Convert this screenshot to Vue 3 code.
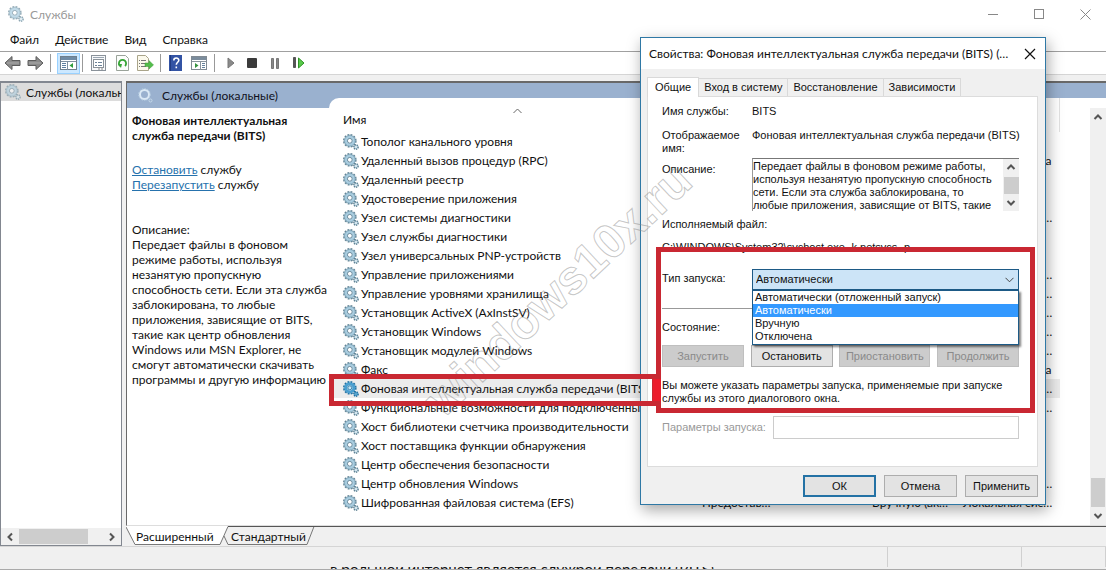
<script setup>
import { ref } from 'vue'

const menus = ['Файл', 'Действие', 'Вид', 'Справка']
const local = 'Локальная сис…'
const network = 'Сетевая служба'

const services = [
  { name: 'Тополог канального уровня' },
  { name: 'Удаленный вызов процедур (RPC)', login: network },
  { name: 'Удаленный реестр' },
  { name: 'Удостоверение приложения' },
  { name: 'Узел системы диагностики', login: local },
  { name: 'Узел службы диагностики' },
  { name: 'Узел универсальных PNP-устройств' },
  { name: 'Управление приложениями', login: local },
  { name: 'Управление уровнями хранилища', login: local },
  { name: 'Установщик ActiveX (AxInstSV)', login: local },
  { name: 'Установщик Windows', login: local },
  { name: 'Установщик модулей Windows', login: local },
  { name: 'Факс', login: network },
  { name: 'Фоновая интеллектуальная служба передачи (BITS)', login: local, selected: true },
  { name: 'Функциональные возможности для подключенных', login: local },
  { name: 'Хост библиотеки счетчика производительности' },
  { name: 'Хост поставщика функции обнаружения' },
  { name: 'Центр обеспечения безопасности' },
  { name: 'Центр обновления Windows', login: local },
  { name: 'Шифрованная файловая система (EFS)', desc: 'Предостав…', start: 'Вручную (ак…', login: local }
]

const dialogTabs = ['Общие', 'Вход в систему', 'Восстановление', 'Зависимости']
const startTypes = ['Автоматически (отложенный запуск)', 'Автоматически', 'Вручную', 'Отключена']
const startType = ref('Автоматически')
const description = ref('Передает файлы в фоновом режиме работы, используя незанятую пропускную способность сети. Если эта служба заблокирована, то любые приложения, зависящие от BITS, такие')
</script>

<template>
  <div class="screen">
    <svg class="defs" aria-hidden="true">
      <symbol id="gears" viewBox="0 0 16 16">
        <circle cx="6.8" cy="6.8" r="5.9" fill="none" stroke="#5f8092" stroke-width="1.8" stroke-dasharray="1.9 1.19" />
        <circle cx="6.8" cy="6.8" r="4.1" fill="none" stroke="#a9cde0" stroke-width="3" />
        <circle cx="6.8" cy="6.8" r="5.3" fill="none" stroke="#6f95aa" stroke-width=".6" />
        <circle cx="6.8" cy="6.8" r="2.4" fill="#fff" stroke="#587d92" stroke-width=".9" />
        <circle cx="13" cy="13" r="2.2" fill="#b7d3e1" stroke="#5f8092" stroke-width="1.4" stroke-dasharray="1.2 .8" />
        <circle cx="13" cy="13" r=".8" fill="#fff" />
      </symbol>
      <symbol id="gears-on" viewBox="0 0 16 16">
        <circle cx="6.8" cy="6.8" r="5.9" fill="none" stroke="#1f6f9f" stroke-width="1.8" stroke-dasharray="1.9 1.19" />
        <circle cx="6.8" cy="6.8" r="4.1" fill="none" stroke="#4a9fd0" stroke-width="3" />
        <circle cx="6.8" cy="6.8" r="2" fill="#c9e6f5" stroke="#2676a5" stroke-width=".9" />
        <circle cx="13" cy="13" r="2.2" fill="#5aa5cf" stroke="#1f6f9f" stroke-width="1.4" stroke-dasharray="1.2 .8" />
      </symbol>
      <symbol id="up" viewBox="0 0 10 8"><path d="M1.5 6 5 2.5 8.500 6" fill="none" stroke="#555" stroke-width="2" /></symbol>
      <symbol id="down" viewBox="0 0 10 8"><path d="M1.5 2 5 5.500 8.500 2" fill="none" stroke="#555" stroke-width="2" /></symbol>
    </svg>

    <header class="titlebar">
      <svg class="gear faded"><use href="#gears" /></svg>
      <span class="window-title">Службы</span>
      <button class="caption" aria-label="Свернуть"><svg width="11" height="11"><path d="M0 5.500h10" stroke="#888" /></svg></button>
      <button class="caption" aria-label="Развернуть"><svg width="11" height="11"><rect x=".5" y=".5" width="9" height="9" fill="none" stroke="#888" /></svg></button>
      <button class="caption" aria-label="Закрыть"><svg width="11" height="11"><path d="m.5.5 10 10m0-10-10 10" stroke="#888" /></svg></button>
    </header>

    <nav class="menubar">
      <button v-for="m in menus" :key="m">{{ m }}</button>
    </nav>

    <div class="toolbar">
      <button class="tool" aria-label="Назад"><svg width="17" height="16"><path d="M1 8 8 1.500v4h8v5H8v4z" fill="#8b8b8b" stroke="#5c5c5c" /><path d="M3 8h12" stroke="#aaa" /></svg></button>
      <button class="tool next" aria-label="Вперед"><svg width="17" height="16"><path d="M16 8 9 1.500v4H1v5h8v4z" fill="#8b8b8b" stroke="#5c5c5c" /><path d="M2 8h12" stroke="#aaa" /></svg></button>
      <i class="sep"></i>
      <button class="tool pressed" aria-label="Дерево консоли">
        <svg width="17" height="15"><rect x=".5" y=".5" width="16" height="13" fill="#fff" stroke="#6f7f8d" /><path d="M1 2.500h15" stroke="#6f8ba5" stroke-width="3" /><path d="M1 5.500h15M7.500 6v8" stroke="#8090a0" /><path d="M2 7.500h4m-4 2h4m-4 2h4" stroke="#5f7f9f" /><path d="M13 7v5l-3.500-2.500z" fill="#2f9e3d" /></svg>
      </button>
      <i class="sep close"></i>
      <button class="tool props" aria-label="Свойства">
        <svg width="15" height="16"><rect x=".5" y=".5" width="14" height="15" fill="#f7f8fa" stroke="#8a929a" /><path d="M2 2.500h11" stroke="#9aa6b2" /><rect x="2.500" y="4.500" width="10" height="8" fill="#fff" stroke="#8a9299" /><path d="M4 7.500h2m1 0h4m-7 3h2m1 0h4" stroke="#6b8299" /><path d="M7 14h2m1 0h2" stroke="#888" /></svg>
      </button>
      <button class="tool refresh" aria-label="Обновить">
        <svg width="13" height="16"><path d="M.5.500h9l3 3v12H.500z" fill="#fbfdfb" stroke="#9aa39a" /><path d="M4 11a3.600 3.600 0 1 1 5 0" fill="none" stroke="#35a535" stroke-width="1.800" /><path d="m2 9 4 0-1 4z" fill="#35a535" /></svg>
      </button>
      <button class="tool" aria-label="Экспорт">
        <svg width="17" height="16"><path d="M.5.500h8l3 3v12H.500z" fill="#fbf9ec" stroke="#a9a48a" /><path d="M2 5.500h1m1 0h5m-7 3h1m1 0h4m-6 3h1m1 0h5" stroke="#777" /><path d="M8 8h4V5.500L16.500 10 12 14v-2.500H8z" fill="#53bd4b" stroke="#3c9b37" stroke-width=".5" /></svg>
      </button>
      <i class="sep"></i>
      <button class="tool help" aria-label="Справка">
        <svg width="13" height="16"><rect width="13" height="16" fill="#3353a4" /><path d="M1.500 0v16" stroke="#203a80" /><path d="M4.800 5.500c0-3.300 5-3.200 5-.3 0 2-2.500 2.200-2.500 4.600M7.300 11.500v1.800" fill="none" stroke="#fff" stroke-width="1.600" /></svg>
      </button>
      <button class="tool action" aria-label="Область действий">
        <svg width="17" height="15"><rect x=".5" y=".5" width="15" height="13" fill="#fff" stroke="#818a92" /><path d="M1 2.500h14" stroke="#7b8c9c" stroke-width="3" /><path d="M1 5.500h14M9.500 6v8" stroke="#8a949d" /><path d="M11 7.500h3m-3 2h3m-3 2h3" stroke="#64809a" /><path d="M4 7v5l3.500-2.500z" fill="#35923d" /></svg>
      </button>
      <i class="sep"></i>
      <button class="tool play" aria-label="Запуск"><svg width="8" height="12"><path d="M1 1v10l6-5z" fill="#8a8a8a" stroke="#777" /></svg></button>
      <button class="tool stop" aria-label="Остановка"><svg width="10" height="10"><rect width="10" height="10" rx="1" fill="#3b3b3b" /></svg></button>
      <button class="tool pause" aria-label="Пауза"><svg width="8" height="11"><path d="M.5.500h2v10h-2zm5 0h2v10h-2z" fill="#888" stroke="#777" /></svg></button>
      <button class="tool restart" aria-label="Перезапуск"><svg width="12" height="12"><path d="M.5.500h2v10h-2z" fill="#555" stroke="#555" /><path d="M5.500 1v10l5.500-5z" fill="#59c94b" stroke="#2f9426" /></svg></button>
    </div>

    <main class="workspace">
      <aside class="tree">
        <div class="tree-node"><svg class="gear pale"><use href="#gears" /></svg><span>Службы (локальные)</span></div>
        <div class="hscroll">
          <svg width="8" height="10"><path d="M6 1.500 2.500 5 6 8.500" fill="none" stroke="#555" stroke-width="2" /></svg>
          <i class="hthumb"></i>
          <svg width="8" height="10"><path d="M2 1.500 5.500 5 2 8.500" fill="none" stroke="#555" stroke-width="2" /></svg>
        </div>
      </aside>

      <section class="right">
        <div class="pane">
          <div class="pane-head">
            <svg width="15" height="15"><circle cx="6.500" cy="6.500" r="4.500" fill="none" stroke="#dbe9f5" stroke-width="2" /><circle cx="6.500" cy="6.500" r="5.900" fill="none" stroke="#b9d0e4" stroke-dasharray="1.500 1.200" /><circle cx="12.500" cy="12.500" r="1.500" fill="none" stroke="#c5d9ea" /></svg>
            <span>Службы (локальные)</span>
          </div>
          <div class="pane-body">
            <div class="details">
              <h2>Фоновая интеллектуальная служба передачи (BITS)</h2>
              <p class="links"><a href="#stop">Остановить</a> службу<br /><a href="#restart">Перезапустить</a> службу</p>
              <p>Описание:<br />Передает файлы в фоновом режиме работы, используя незанятую пропускную способность сети. Если эта служба заблокирована, то любые приложения, зависящие от BITS, такие как центр обновления Windows или MSN Explorer, не смогут автоматически скачивать программы и другую информацию</p>
            </div>
            <div class="list">
              <table>
                <colgroup><col class="c-name" /><col class="c-desc" /><col class="c-start" /><col /></colgroup>
                <thead>
                  <tr><th scope="col">Имя<svg class="sort" width="9" height="6"><path d="m.5 5 4-4 4 4" fill="none" stroke="#666" /></svg></th><th></th><th></th><th class="last"></th></tr>
                </thead>
                <tbody>
                  <tr v-for="s in services" :key="s.name" :class="{ selected: s.selected }">
                    <td><div class="name"><svg class="gear"><use :href="s.selected ? '#gears-on' : '#gears'" /></svg>{{ s.name }}</div></td>
                    <td>{{ s.desc }}</td>
                    <td>{{ s.start }}</td>
                    <td>{{ s.login }}</td>
                  </tr>
                </tbody>
              </table>
              <div class="vscroll">
                <svg width="10" height="8"><use href="#up" /></svg>
                <i class="vthumb"></i>
                <svg width="10" height="8"><use href="#down" /></svg>
              </div>
            </div>
          </div>
        </div>
        <div class="view-tabs">
          <svg class="tab-shape" width="190" height="20"><path d="M0 0 9 18.500H94L102 0z" fill="#fff" /><path d="M0 1 9 18.500H94L102 .5M98 10l4 8.500h79L188 .5" fill="none" stroke="#777" /></svg>
          <button class="wide">Расширенный</button>
          <button>Стандартный</button>
          <i class="tab-line"></i>
        </div>
      </section>
    </main>

    <footer class="status"><i></i><i class="s2"></i><i class="s3"></i></footer>
    <div class="sliver">в большой интернет является службой передачи (BITS)</div>

    <section class="dialog" role="dialog" aria-labelledby="dlg-title">
      <div class="dlg-title">
        <span id="dlg-title">Свойства: Фоновая интеллектуальная служба передачи (BITS) (…</span>
        <button aria-label="Закрыть окно"><svg width="12" height="12"><path d="m1 1 10 10m0-10L1 11" stroke="#111" stroke-width="1.200" /></svg></button>
      </div>
      <div class="dlg-body">
        <div class="dlg-tabs" role="tablist">
          <button v-for="(t, i) in dialogTabs" :key="t" role="tab" :class="{ active: i === 0 }">{{ t }}</button>
        </div>
        <div class="sheet">
          <div class="row r1"><span>Имя службы:</span><span>BITS</span></div>
          <div class="row r2"><span>Отображаемое имя:</span><span class="nowrap">Фоновая интеллектуальная служба передачи (BITS)</span></div>
          <div class="row r3">
            <label for="desc">Описание:</label>
            <div class="descbox">
              <textarea id="desc" v-model="description" readonly></textarea>
              <div class="mini"><svg width="10" height="8"><use href="#up" /></svg><i></i><svg width="10" height="8"><use href="#down" /></svg></div>
            </div>
          </div>
          <div class="exe">Исполняемый файл:</div>
          <div class="path">C:\WINDOWS\System32\svchost.exe -k netsvcs -p</div>
          <div class="row r4">
            <label for="start">Тип запуска:</label>
            <div class="combo">
              <select id="start" v-model="startType"><option v-for="t in startTypes" :key="t">{{ t }}</option></select>
              <svg width="9" height="6"><path d="m.5.800 4 4 4-4" fill="none" stroke="#444" /></svg>
              <ul role="listbox" aria-label="Варианты запуска">
                <li v-for="t in startTypes" :key="t" role="option" :class="{ on: t === startType }" @click="startType = t">{{ t }}</li>
              </ul>
            </div>
          </div>
          <hr />
          <div class="state">Состояние:</div>
          <div class="actions">
            <button disabled>Запустить</button><button>Остановить</button><button disabled>Приостановить</button><button disabled>Продолжить</button>
          </div>
          <p class="hint">Вы можете указать параметры запуска, применяемые при запуске службы из этого диалогового окна.</p>
          <div class="params"><label for="params">Параметры запуска:</label><input id="params" type="text" disabled /></div>
        </div>
        <div class="dlg-foot"><button class="ok">ОК</button><button>Отмена</button><button>Применить</button></div>
      </div>
    </section>

    <div class="watermark" aria-hidden="true">windows10x.ru</div>
    <div class="mark mark-row"></div>
    <div class="mark mark-form"></div>
    <div class="mark-joint"></div>
  </div>
</template>

<style>
html, body { background: #f0f0f0; }
</style>

<style scoped>
* { box-sizing: border-box; }
.screen {
  position: relative;
  display: flex;
  flex-direction: column;
  min-height: 100vh;
  overflow: hidden;
  background: #f0f0f0;
  color: #111;
  font: 12px/15px Lato, Roboto, "Noto Sans", sans-serif;
}
button { font: inherit; color: inherit; border: 0; padding: 0; background: none; white-space: nowrap; }
svg { display: block; flex: none; }
.defs { position: absolute; width: 0; height: 0; }
.gear { width: 16px; height: 16px; }
.faded { opacity: .7; }
.pale { opacity: .55; }
i { display: block; flex: none; }

.titlebar { display: flex; align-items: center; height: 28px; padding: 0 15px 0 8px; background: #fff; color: #999; }
.window-title { flex: 1; margin-left: 6px; }
.caption { display: flex; justify-content: center; width: 11px; margin-left: 35px; }
.menubar { display: flex; align-items: center; gap: 16px; height: 24px; padding: 0 10px; background: #fff; border-bottom: 1px solid #a0a0a0; }
.toolbar { display: flex; align-items: center; height: 23px; padding-left: 4px; background: #fff; border-bottom: 1px solid #d5d5d5; }
.tool { display: flex; align-items: center; justify-content: center; }
.next { margin-left: 6px; }
.sep { width: 1px; height: 18px; margin: 0 6px; background: #999; }
.sep.close { margin: 0 8px 0 2px; }
.pressed { width: 23px; height: 21px; background: #cce8ff; border: 1px solid #99d1ff; }
.refresh { margin: 0 8px 0 10px; }
.help { margin-left: 2px; }
.action { margin-left: 9px; }
.play { margin-left: 6px; }
.stop { margin-left: 12px; }
.pause { margin-left: 14px; }
.restart { margin-left: 14px; }

.workspace { flex: 1; display: grid; grid-template-columns: 122px minmax(0, 1fr); column-gap: 4px; padding-top: 6px; }
.tree { display: flex; flex-direction: column; justify-content: space-between; border: 1px solid #828790; border-top-width: 2px; background: #fff; overflow: hidden; }
.tree-node { display: flex; align-items: center; height: 18px; padding-left: 4px; white-space: nowrap; background: #dcdcdc; }
.tree-node span { margin-left: 5px; overflow: hidden; }
.hscroll { display: flex; align-items: center; height: 17px; padding: 0 5px; background: #f0f0f0; }
.hthumb { width: 69px; height: 15px; margin: 0 auto 0 5px; background: #cdcdcd; }

.right { display: flex; flex-direction: column; min-width: 0; }
.pane { flex: 1; display: flex; flex-direction: column; border: 2px solid #696969; border-right: 0; border-bottom: 1px solid #ddd; border-left-width: 1px; background: #fff; }
.pane-head { display: flex; align-items: center; height: 25px; padding-left: 11px; background: #9ab1cf; color: #112; }
.pane-head span { margin-left: 9px; }
.pane-body { flex: 1; display: grid; grid-template-columns: 202px minmax(0, 1fr); }
.details { padding: 5px 0 0 5px; }
.details h2 { margin: 0 0 19px; font-size: 12px; line-height: 15px; }
.details p { margin: 0; }
.details .links { margin-bottom: 30px; }
.details a { color: #2672ad; }
.list { display: grid; grid-template-columns: minmax(0, 1fr) 16px; margin-top: -10px; border-radius: 10px 0 0 0; background: #fff; }
table { width: 731px; table-layout: fixed; border-collapse: collapse; align-self: start; }
.c-name { width: 370px; }
.c-desc { width: 170px; }
.c-start { width: 91px; }
th { position: relative; height: 34px; padding: 9px 0 0 14px; font-weight: normal; text-align: left; }
.last { border-right: 1px solid #e2e2e2; }
.sort { position: absolute; left: 184px; top: 10px; }
td { height: 19px; padding: 0 0 0 3px; white-space: nowrap; }
td:first-child { padding-left: 14px; }
.name { display: flex; align-items: center; gap: 2px; }
.selected td { background: #ececec; }
.vscroll { display: flex; flex-direction: column; align-items: center; margin-top: 10px; padding: 5px 0; background: #f0f0f0; }
.vthumb { width: 14px; height: 29px; margin: auto 0 5px; background: #cdcdcd; }
.view-tabs { position: relative; display: flex; align-items: center; height: 20px; padding-left: 10px; }
.view-tabs button { position: relative; width: 90px; text-align: left; }
.view-tabs .wide { width: 95px; }
.tab-shape { position: absolute; left: 0; top: 0; }
.tab-line { position: absolute; left: 102px; right: 0; top: 0; height: 1px; background: #555; }

.status { display: flex; justify-content: flex-end; height: 21px; border-top: 1px solid #d5d5d5; }
.status i { width: 134px; border-left: 1px solid #d0d0d0; }
.status .s2 { width: 84px; }
.status .s3 { width: 1px; }
.sliver { height: 3px; padding-left: 330px; overflow: hidden; border-bottom: 1px solid #aaa; font-size: 15px; line-height: 4px; white-space: nowrap; }

.dialog { position: absolute; top: 37px; right: 60px; width: 406px; border: 1px solid #2f78a5; background: #f0f0f0; box-shadow: 2px 5px 14px rgba(0, 0, 0, .35); }
.dlg-title { display: flex; align-items: center; justify-content: space-between; height: 31px; padding: 0 9px 0 8px; background: #fff; white-space: nowrap; }
.dlg-body { padding: 8px 7px 7px 6px; font: 11px/13px "Liberation Sans", Arial, sans-serif; }
.dlg-tabs { display: flex; align-items: flex-end; height: 19px; }
.dlg-tabs button { height: 18px; padding: 0 5px; border: 1px solid #d9d9d9; border-left: 0; border-bottom: 0; }
.dlg-tabs .active { height: 20px; margin-bottom: -1px; padding: 0 7px; border-left: 1px solid #d9d9d9; background: #fff; z-index: 1; }
.sheet { display: flow-root; height: 371px; padding: 0 18px 0 14px; border: 1px solid #dcdcdc; background: #fff; }
.row { display: grid; grid-template-columns: 90px minmax(0, 1fr); }
.nowrap { white-space: nowrap; }
.r1 { margin-top: 8px; }
.r2 { margin-top: 11px; }
.r3 { margin-top: 8px; }
.descbox { display: flex; height: 47px; border-top: 1px solid #777; border-left: 1px solid #999; }
.r3 { margin-top: 3px; }
.r3 label { padding-top: 5px; }
.descbox { height: 53px; }
textarea { flex: 1; min-width: 0; height: 52px; margin: 0; padding: 1px 8px 0 0; border: 0; outline: 0; resize: none; overflow: hidden; background: #fff; color: #111; font: inherit; }
.mini { display: flex; flex-direction: column; align-items: center; justify-content: space-between; width: 16px; padding: 4px 0; background: #f0f0f0; }
.mini i { width: 15px; height: 17px; background: #cdcdcd; }
.exe { margin-top: 7px; }
.path { margin-top: 10px; }
.r4 { margin-top: 15px; }
.r4 label { padding-top: 3px; }
.combo { position: relative; }
select { display: block; width: 100%; height: 21px; padding: 0 3px; border: 1px solid #1d5a86; border-radius: 0; appearance: none; background: #cce4f7; color: #111; font: inherit; }
.combo > svg { position: absolute; right: 5px; top: 8px; }
ul { position: absolute; left: 0; right: 0; top: 21px; margin: 0; padding: 0 0 1px; list-style: none; border: 1px solid #1d5a86; background: #fff; box-shadow: 2px 2px 2px rgba(0, 0, 0, .5); }
li { height: 13px; padding-left: 2px; }
.on { background: #3399ff; color: #fff; }
hr { margin: 18px 0 0; border: 0; border-top: 1px solid #999; }
.state { margin-top: 12px; }
.actions { display: grid; grid-template-columns: 82px 82px 91px 82px; justify-content: space-between; margin-top: 11px; }
.actions button, .dlg-foot button { height: 22px; border: 1px solid #adadad; background: #e3e3e3; }
.actions button:disabled { background: #cccccc; border-color: #bfbfbf; color: #8a8a8a; }
.hint { margin: 12px 0 0; }
.params { display: flex; align-items: center; margin-top: 11px; color: #999; }
.params label { width: 111px; }
.params input { flex: 1; min-width: 0; height: 23px; border: 1px solid #ccc; background: #fff; }
.dlg-foot { display: flex; justify-content: flex-end; gap: 8px; margin-top: 8px; }
.dlg-foot button { width: 73px; }
.dlg-foot .ok { border: 2px solid #2472a5; }

.watermark {
  position: absolute; left: 386px; top: 262px; font: bold 48px/56px "Liberation Sans", Arial, sans-serif;
  color: transparent; -webkit-text-stroke: 1px rgba(130, 130, 130, .45); transform: rotate(-43deg); pointer-events: none;
}
.mark { position: absolute; border: 5px solid #c92832; pointer-events: none; }
.mark-row { left: 329px; top: 374px; width: 328px; height: 32px; }
.mark-form { right: 71px; top: 247px; width: 379px; height: 166px; }
.mark-joint { position: absolute; right: 445px; top: 379px; width: 8px; height: 22px; background: #ec1c2c; }
</style>
